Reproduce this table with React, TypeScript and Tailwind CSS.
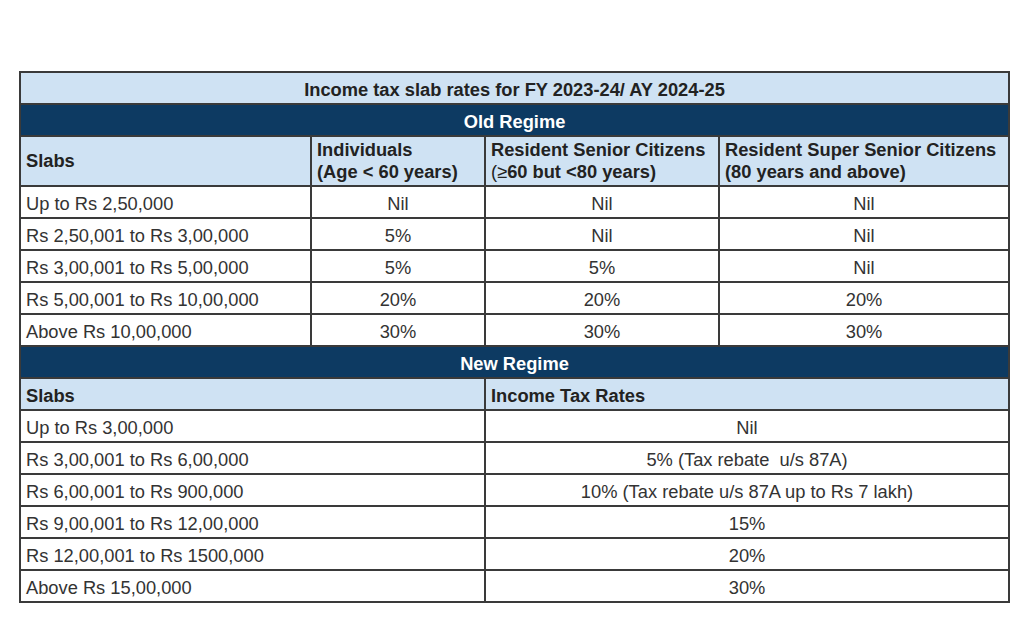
import React from "react";

const oldRows = [
  ["Up to Rs 2,50,000", "Nil", "Nil", "Nil"],
  ["Rs 2,50,001 to Rs 3,00,000", "5%", "Nil", "Nil"],
  ["Rs 3,00,001 to Rs 5,00,000", "5%", "5%", "Nil"],
  ["Rs 5,00,001 to Rs 10,00,000", "20%", "20%", "20%"],
  ["Above Rs 10,00,000", "30%", "30%", "30%"],
];

const newRows = [
  ["Up to Rs 3,00,000", "Nil"],
  ["Rs 3,00,001 to Rs 6,00,000", "5% (Tax rebate\u00a0 u/s 87A)"],
  ["Rs 6,00,001 to Rs 900,000", "10% (Tax rebate u/s 87A up to Rs 7 lakh)"],
  ["Rs 9,00,001 to Rs 12,00,000", "15%"],
  ["Rs 12,00,001 to Rs 1500,000", "20%"],
  ["Above Rs 15,00,000", "30%"],
];

const base = "border-2 border-[#3a3a3a] px-[5px] pb-0 text-[18.3px]";
const cell = `${base} h-8 pt-[2px] leading-[21px]`;
const light = "bg-[#cfe2f3]";
const dark = "bg-[#0d3a62] text-white font-bold text-center";
const head = `${base} ${light} font-bold text-[#222] h-[50px] pt-0 leading-[22px]`;

export default function App() {
  return (
    <div
      className="w-[1024px] h-[618px] bg-white pt-[71px] pl-[19px]"
      style={{ fontFamily: '"Liberation Sans", Arial, sans-serif' }}
    >
      <table className="table-fixed border-collapse w-[989px] text-[#333]">
        <colgroup>
          <col className="w-[291px]" />
          <col className="w-[174px]" />
          <col className="w-[234px]" />
          <col className="w-[290px]" />
        </colgroup>
        <tbody>
          <tr>
            <td colSpan={4} className={`${cell} ${light} text-center font-bold text-[#222]`}>
              Income tax slab rates for FY 2023-24/ AY 2024-25
            </td>
          </tr>
          <tr>
            <td colSpan={4} className={`${cell} ${dark}`}>Old Regime</td>
          </tr>
          <tr>
            <td className={head}>Slabs</td>
            <td className={head}>
              Individuals
              <br />
              (Age &lt; 60 years)
            </td>
            <td className={head}>
              Resident Senior Citizens
              <br />
              <span className="font-normal">(≥</span>60 but &lt;80 years)
            </td>
            <td className={head}>
              Resident Super Senior Citizens
              <br />
              (80 years and above)
            </td>
          </tr>
          {oldRows.map((r) => (
            <tr key={r[0]}>
              <td className={cell}>{r[0]}</td>
              <td className={`${cell} text-center`}>{r[1]}</td>
              <td className={`${cell} text-center`}>{r[2]}</td>
              <td className={`${cell} text-center`}>{r[3]}</td>
            </tr>
          ))}
          <tr>
            <td colSpan={4} className={`${cell} ${dark}`}>New Regime</td>
          </tr>
          <tr>
            <td colSpan={2} className={`${cell} ${light} font-bold text-[#222]`}>Slabs</td>
            <td colSpan={2} className={`${cell} ${light} font-bold text-[#222]`}>Income Tax Rates</td>
          </tr>
          {newRows.map((r) => (
            <tr key={r[0]}>
              <td colSpan={2} className={cell}>{r[0]}</td>
              <td colSpan={2} className={`${cell} text-center`}>{r[1]}</td>
            </tr>
          ))}
        </tbody>
      </table>
    </div>
  );
}
